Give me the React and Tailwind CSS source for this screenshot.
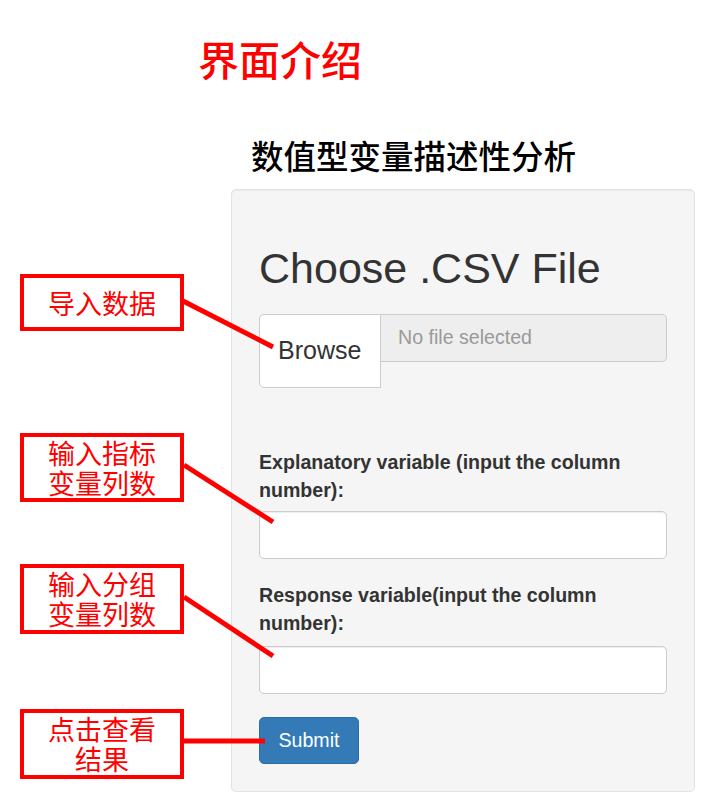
const cjk = { fontFamily: '"Noto Sans CJK SC", "Noto Sans", sans-serif' };

const Callout = ({ lines, className }) => (
  <div
    className={`w-[164px] border-4 border-[#ff0000] bg-white flex flex-col items-center justify-center text-[27px] leading-[30px] text-[#ff0000] ${className}`}
    style={cjk}
  >
    {lines.map((l) => (
      <span key={l}>{l}</span>
    ))}
  </div>
);

const App = () => {
  return (
    <div
      className="relative w-[709px] h-[810px] bg-white overflow-hidden"
      style={{ fontFamily: '"Liberation Sans", Arial, sans-serif' }}
    >
      {/* HEADINGS */}
      <div className="pl-[198px] pt-[38px]">
        <h1 className="text-[41px] leading-[41px] font-medium text-[#ff0000]" style={cjk}>
          界面介绍
        </h1>
      </div>
      <div className="pl-[251px] mt-[59px]">
        <h2 className="text-[32.5px] leading-[33px] font-medium text-black" style={cjk}>
          数值型变量描述性分析
        </h2>
      </div>

      {/* CONTENTS */}
      <div className="flex mt-[18px]">
        {/* CALLOUTS */}
        <div className="w-[231px] pl-[20px] flex flex-col">
          <Callout lines={["导入数据"]} className="mt-[85px] h-[57px]" />
          <Callout lines={["输入指标", "变量列数"]} className="mt-[102px] h-[69px]" />
          <Callout lines={["输入分组", "变量列数"]} className="mt-[62px] h-[70px]" />
          <Callout lines={["点击查看", "结果"]} className="mt-[75px] h-[70px]" />
        </div>

        {/* PANEL */}
        <div className="w-[464px] bg-[#f5f5f5] border border-[#e3e3e3] rounded-[5px] px-[27px] pt-[27px] pb-[27px] flex flex-col shadow-[inset_0_1px_1px_rgba(0,0,0,0.05)]">
          <h3 className="mt-[28px] text-[43px] leading-[46px] text-[#333]">Choose .CSV File</h3>

          <div className="mt-[23px] flex items-start">
            <div className="w-[122px] h-[74px] bg-white border border-[#ccc] rounded-l-[5px] flex items-center pl-[18px] text-[25px] text-[#333]">
              Browse
            </div>
            <div className="flex-1 h-[48px] bg-[#eeeeee] border border-l-0 border-[#ccc] rounded-r-[5px] flex items-center pl-[17px] text-[19.6px] text-[#999]">
              No file selected
            </div>
          </div>

          <label className="mt-[60px] text-[19.6px] leading-[28px] font-bold text-[#333]">
            Explanatory variable (input the column number):
          </label>
          <div className="mt-[7px] h-[48px] bg-white border border-[#ccc] rounded-[5px] shadow-[inset_0_1px_1px_rgba(0,0,0,0.075)]"></div>

          <label className="mt-[22px] text-[19.6px] leading-[28px] font-bold text-[#333]">
            Response variable(input the column number):
          </label>
          <div className="mt-[9px] h-[48px] bg-white border border-[#ccc] rounded-[5px] shadow-[inset_0_1px_1px_rgba(0,0,0,0.075)]"></div>

          <div className="mt-[23px]">
            <button className="w-[100px] h-[47px] bg-[#337ab7] border border-[#2e6da4] rounded-[5px] text-white text-[19.6px]">
              Submit
            </button>
          </div>
        </div>
      </div>

      {/* CONNECTORS */}
      <svg className="absolute inset-0 pointer-events-none" width="709" height="810">
        <g stroke="#ff0000" strokeWidth="5" strokeLinecap="butt">
          <line x1="183" y1="301" x2="273" y2="347" />
          <line x1="184" y1="465" x2="273" y2="522" />
          <line x1="184" y1="597" x2="273" y2="656" />
          <line x1="184" y1="741" x2="265" y2="741" />
        </g>
      </svg>
    </div>
  );
};

export default App;
